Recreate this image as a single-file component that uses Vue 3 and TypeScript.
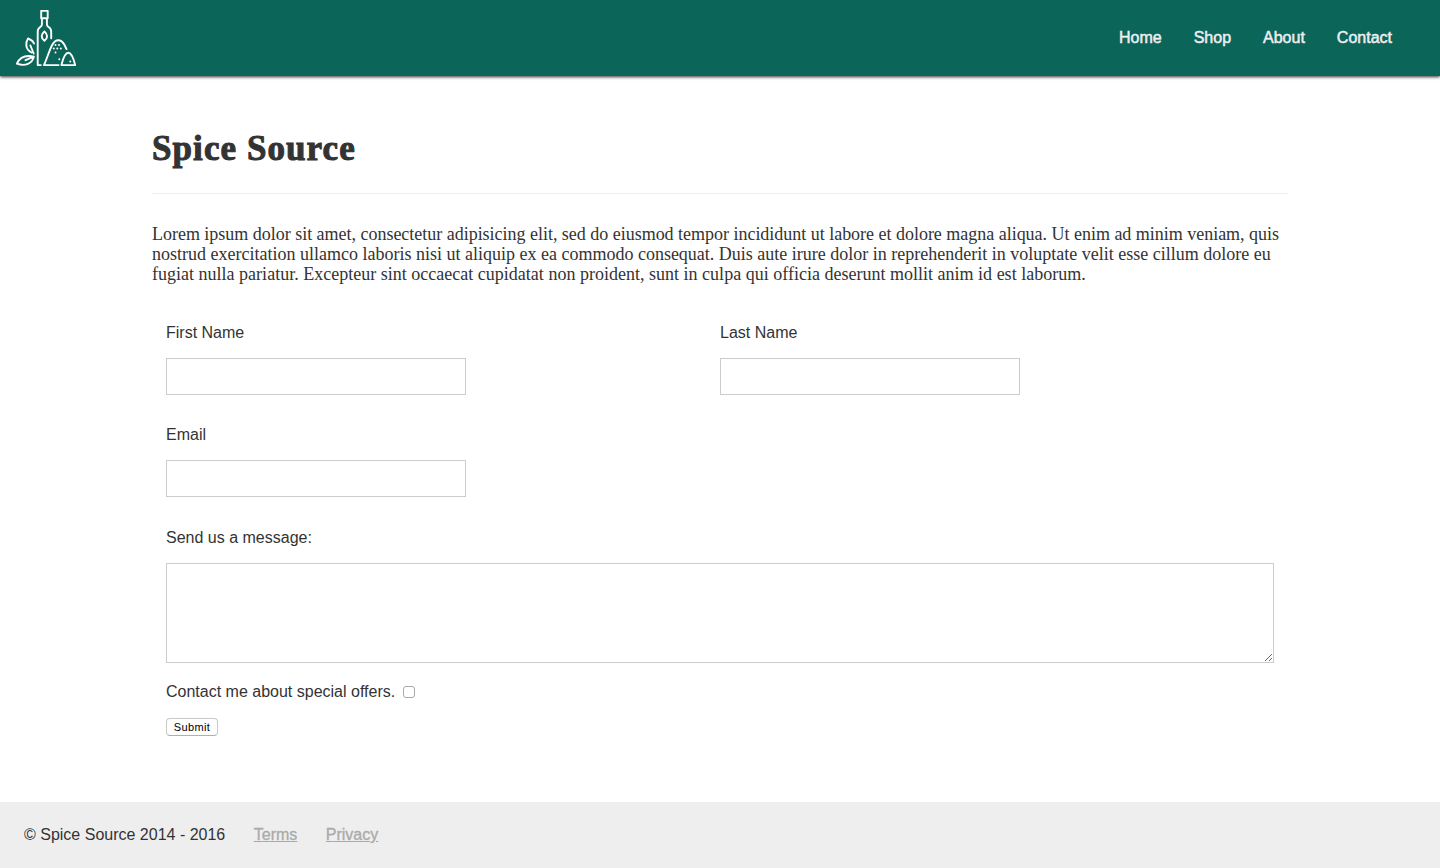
<script setup lang="ts">
import { ref } from 'vue'

const links: string[] = ['Home', 'Shop', 'About', 'Contact']
const firstName = ref('')
const lastName = ref('')
const email = ref('')
const message = ref('')
const offers = ref(false)
</script>

<template>
  <div class="page">
    <header class="header">
      <svg class="logo" viewBox="0 0 60 56" width="60" height="56" fill="none" stroke="#fff" stroke-width="1.9" stroke-linecap="round" stroke-linejoin="round">
        <path d="M25.2 .9h6.5v7.4h-6.5zM25.9 8.3v6.2c0 1-.5 1.7-1.4 2.3-1.7 1.1-2.8 2.4-2.8 4.7v33.600h3.1M30.9 8.3v6.2c0 1 .5 1.7 1.4 2.3 1.8 1.1 2.9 2.400 2.900 4.700v6.700" />
        <path d="M28.400 21.500c3.600 3 3.600 6.400 0 9.300-3.600-2.900-3.600-6.300 0-9.300z" />
        <path d="M28 55.100c3.200-7 5.400-15.200 8.300-20.300 3.300-6.100 8.700-6.100 12-.3l2.200 4.600M28 55.100h14.500" />
        <path d="M45.400 55.100c1.400-5.700 3.600-12.400 6.900-12.400s5.500 6.700 6.900 12.400z" />
        <path d="M15.500 42.500c-6.300-3-6.200-10-3.500-14 3 1.200 5.200 2.400 6 5M14.400 35.500l3.300 8" />
        <path d="M.9 53.700c2.500-5.700 8.400-8.900 17-7.100-1.600 6.600-8.500 10.300-17 7.100zM9.500 50.200l8.300-3.600" />
        <g fill="#fff" stroke="none">
          <circle cx="39.500" cy="35" r="1" /><circle cx="43" cy="35" r="1" />
          <circle cx="37.800" cy="38.500" r="1" /><circle cx="41.300" cy="38.500" r="1" /><circle cx="44.800" cy="38.500" r="1" />
          <circle cx="39.500" cy="42.500" r="1" /><circle cx="43.300" cy="49.300" r="1" /><circle cx="54.300" cy="51.500" r="1" />
        </g>
      </svg>
      <nav class="nav">
        <a v-for="link in links" :key="link">{{ link }}</a>
      </nav>
    </header>

    <main class="content">
      <h1>Spice Source</h1>
      <p class="intro">
        <span class="l1">Lorem ipsum dolor sit amet, consectetur adipisicing elit, sed do eiusmod tempor incididunt ut labore et dolore magna aliqua. Ut enim ad minim veniam, quis</span>
        <span>nostrud exercitation ullamco laboris nisi ut aliquip ex ea commodo consequat. Duis aute irure dolor in reprehenderit in voluptate velit esse cillum dolore eu</span>
        <span class="l3">fugiat nulla pariatur. Excepteur sint occaecat cupidatat non proident, sunt in culpa qui officia deserunt mollit anim id est laborum.</span>
      </p>
      <form class="form" @submit.prevent>
        <div class="names">
          <label class="field">First Name<input v-model="firstName" type="text" /></label>
          <label class="field">Last Name<input v-model="lastName" type="text" /></label>
        </div>
        <label class="field email">Email<input v-model="email" type="text" /></label>
        <label class="field message">Send us a message:<textarea v-model="message"></textarea></label>
        <label class="offers">Contact me about special offers.<input v-model="offers" type="checkbox" /></label>
        <button type="submit">Submit</button>
      </form>
    </main>

    <footer class="footer">
      <span>© Spice Source 2014 - 2016</span>
      <a>Terms</a>
      <a>Privacy</a>
    </footer>
  </div>
</template>

<style>
body { margin: 0; background: #fff; }
</style>

<style scoped>
.page {
  display: flex;
  flex-direction: column;
  height: 868px;
  overflow: hidden;
  font: 16px/20px "Liberation Sans", Arial, sans-serif;
  color: #333;
}
.page * { box-sizing: border-box; }
.header {
  display: flex;
  justify-content: space-between;
  height: 76px;
  flex: none;
  padding: 10px 48px 0 16px;
  background: #0b6559;
  box-shadow: 0 1px 3px #000c;
}
.logo { display: block; }
.nav { display: flex; gap: 32px; padding-top: 18px; color: #eee; -webkit-text-stroke: .5px #eee; }
.content { flex: 1; padding: 54px 152px 0; }
h1 {
  height: 64px;
  margin: 0;
  border-bottom: 1px solid #eee;
  font: bold 35px/38px "Liberation Serif", serif;
  letter-spacing: 1.08px;
  -webkit-text-stroke: 1px #333;
}
.intro {
  margin: 30px 0 0;
  font: 18px/20px "Liberation Serif", serif;
}
.intro span { display: block; white-space: nowrap; }
.intro .l1 { letter-spacing: -.018px; }
.intro .l3 { letter-spacing: .01px; }
.form { padding: 39px 14px 0; }
.names { display: grid; grid-template-columns: 1fr 1fr; }
.field { display: block; }
.field input {
  display: block;
  width: 300px;
  height: 37px;
  margin: 15px 0 0;
  border: 1px solid #ccc;
}
.email { margin-top: 30px; }
.message { margin-top: 31px; }
textarea {
  display: block;
  width: 100%;
  height: 100px;
  margin: 15px 0 0;
  border: 1px solid #ccc;
}
.offers { display: flex; align-items: center; gap: 8px; margin-top: 19px; }
.offers input {
  appearance: none;
  width: 12px;
  height: 12px;
  margin: 0 0 1px;
  border: 1px solid #aaa;
  border-radius: 3px;
  background: #fff;
}
button {
  display: block;
  width: 52px;
  height: 18px;
  margin: 16px 0 0;
  padding: 0;
  border: 1px solid #c8c8c8;
  border-bottom-color: #b0b0b0;
  border-radius: 4px;
  background: #fff;
  color: #000;
  font: 11px/14px "Liberation Sans", Arial, sans-serif;
  letter-spacing: .4px;
}
.footer {
  display: flex;
  gap: 28.500px;
  flex: none;
  height: 66px;
  padding: 23px 24px;
  background: #eee;
}
.footer a { color: #aaa; text-decoration: underline; -webkit-text-stroke: .3px #aaa; }
</style>
